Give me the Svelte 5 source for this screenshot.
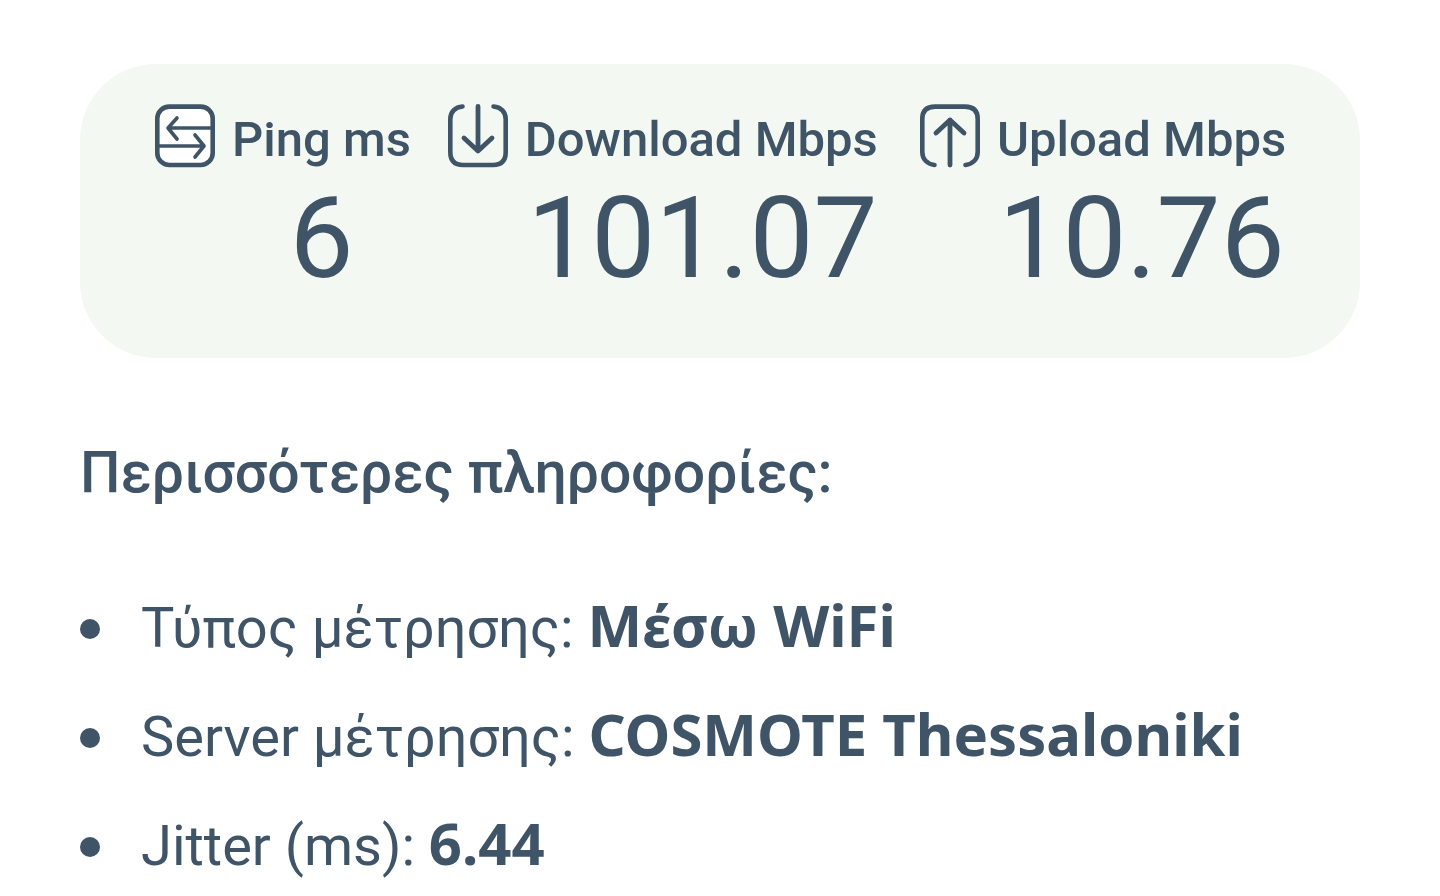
<script>
  const metrics = [
    { icon: 'ping', label: 'Ping ms', value: '6' },
    { icon: 'download', label: 'Download Mbps', value: '101.07' },
    { icon: 'upload', label: 'Upload Mbps', value: '10.76' }
  ];
  const details = [
    { label: 'Τύπος μέτρησης:', value: 'Μέσω WiFi' },
    { label: 'Server μέτρησης:', value: 'COSMOTE Thessaloniki' },
    { label: 'Jitter (ms):', value: '6.44' }
  ];
</script>

<main>
  <section class="results">
    {#each metrics as metric}
      <div class="metric">
        <svg class="icon" viewBox="0 0 60 64" aria-hidden="true">
          {#if metric.icon === 'ping'}
            <rect x="2.3" y="2.6" width="55.4" height="58.4" rx="12" fill="#fff" stroke-width="4.6" />
            <path d="M57 24H13M22 14L13 24L22 35M3 42H49M40 31L49 42L40 53" stroke-width="3.6" />
          {:else if metric.icon === 'download'}
            <path d="M14.5 2.5C7 3 2.3 8 2.3 15V48Q2.3 61 15 61H45Q57.7 61 57.7 48V15C57.7 8 53 3 45.5 2.5" stroke-width="4.6" />
            <path d="M30 2.5V47M16 34L30 47L44 34" stroke-width="4.8" />
          {:else}
            <path d="M14.5 61C7 60 2.3 55 2.3 48V15Q2.3 2.6 15 2.6H45Q57.7 2.6 57.7 15V48C57.7 55 53 60 45.5 61" stroke-width="4.6" />
            <path d="M30 61V16M16 29L30 16L44 29" stroke-width="4.8" />
          {/if}
        </svg>
        <span class="label">{metric.label}</span>
        <span class="value">{metric.value}</span>
      </div>
    {/each}
  </section>

  <h2>Περισσότερες πληροφορίες:</h2>
  <ul>
    {#each details as detail}
      <li><span>{detail.label} <strong>{detail.value}</strong></span></li>
    {/each}
  </ul>
</main>

<style>
  :global(body) {
    margin: 0;
    background: #fff;
  }
  main {
    padding: 64px 80px 0;
    color: #3f5467;
    font-family: Roboto, "Noto Sans", sans-serif;
  }
  .results {
    display: grid;
    grid-template-columns: 252fr 431fr 363fr;
    gap: 40px;
    padding: 40px 76px 52px 75px;
    border-radius: 76px;
    background: #f3f8f2;
  }
  .metric {
    display: grid;
    grid-template-columns: 60px 1fr;
    column-gap: 17px;
    align-content: start;
    min-width: 0;
  }
  .icon {
    width: 60px;
    height: 64px;
    fill: none;
    stroke: #3f5467;
    stroke-linecap: round;
    stroke-linejoin: round;
  }
  .label {
    padding-top: 6px;
    font-size: 49px;
    font-weight: 500;
    line-height: 60px;
    white-space: nowrap;
  }
  .value {
    grid-column: 2;
    font-size: 114px;
    line-height: 136px;
    text-align: center;
    white-space: nowrap;
  }
  h2 {
    margin: 77px 0 0;
    font-size: 57px;
    font-weight: 500;
    line-height: 76px;
  }
  ul {
    margin: 63px 0 0;
    padding: 0;
    list-style: none;
  }
  li {
    display: flex;
    align-items: center;
    gap: 41px;
    font-size: 56px;
    line-height: 109px;
  }
  li::before {
    content: "";
    width: 20px;
    height: 20px;
    border-radius: 50%;
    background: #3f5467;
  }
  strong {
    font-family: "Noto Sans", sans-serif;
    font-size: 58px;
    font-weight: 700;
    line-height: 76px;
  }
</style>
